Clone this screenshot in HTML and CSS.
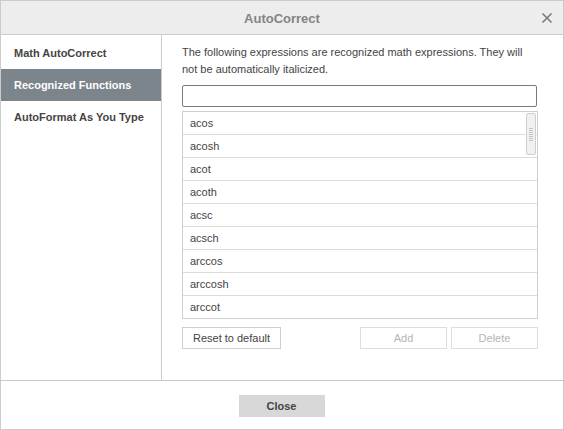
FILE: index.html
```html
<!DOCTYPE html>
<html>
<head>
<meta charset="utf-8">
<link rel="stylesheet" href="styles.css">
</head>
<body>
<div class="dialog">
  <div class="header">
    <span class="title">AutoCorrect</span>
    <span class="close-x">
      <svg width="12" height="12" viewBox="0 0 12 12"><path d="M1.5 1.5 L10.5 10.5 M10.5 1.5 L1.5 10.5" stroke="#7a7a7a" stroke-width="1.6" fill="none"/></svg>
    </span>
  </div>
  <div class="main">
    <div class="nav">
      <div class="nav-item">Math AutoCorrect</div>
      <div class="nav-item active">Recognized Functions</div>
      <div class="nav-item">AutoFormat As You Type</div>
    </div>
    <div class="content">
      <p class="desc">The following expressions are recognized math expressions. They will not be automatically italicized.</p>
      <div class="input"></div>
      <div class="list">
        <div class="row">acos</div>
        <div class="row">acosh</div>
        <div class="row">acot</div>
        <div class="row">acoth</div>
        <div class="row">acsc</div>
        <div class="row">acsch</div>
        <div class="row">arccos</div>
        <div class="row">arccosh</div>
        <div class="row last">arccot</div>
        <div class="thumb"><div class="grip"></div></div>
      </div>
      <div class="buttons">
        <div class="btn reset">Reset to default</div>
        <div class="spacer"></div>
        <div class="btn disabled">Add</div>
        <div class="btn disabled">Delete</div>
      </div>
    </div>
  </div>
  <div class="footer">
    <div class="close-btn">Close</div>
  </div>
</div>
</body>
</html>
```
FILE: styles.css
```css
html, body {
  margin: 0;
  padding: 0;
  background: #fff;
}
body {
  font-family: "Liberation Sans", Arial, sans-serif;
  font-size: 11px;
  color: #444;
}
.dialog {
  width: 564px;
  height: 430px;
  box-sizing: border-box;
  border: 1px solid #cbcbcb;
  display: flex;
  flex-direction: column;
}
.header {
  height: 33px;
  flex: none;
  background: #ededed;
  border-bottom: 1px solid #cbcbcb;
  position: relative;
  display: flex;
  align-items: center;
  justify-content: center;
}
.title {
  font-size: 13px;
  font-weight: bold;
  color: #848484;
  padding-top: 1px;
}
.close-x {
  position: absolute;
  right: 10px;
  top: 11px;
  width: 12px;
  height: 12px;
  display: block;
}
.close-x svg { display: block; }
.main {
  height: 345px;
  flex: none;
  display: flex;
}
.nav {
  width: 160px;
  border-right: 1px solid #cbcbcb;
  padding-top: 2px;
}
.nav-item {
  height: 32px;
  line-height: 32px;
  padding-left: 13px;
  font-weight: bold;
  color: #444;
}
.nav-item.active {
  background: #7d858c;
  color: #fff;
}
.content {
  flex: 1;
  padding: 9px 25px 0 20px;
}
.desc {
  margin: 0;
  line-height: 17px;
  color: #444;
  width: 345px;
}
.input {
  margin-top: 7px;
  height: 20px;
  width: 353px;
  border: 1px solid #7a7a7a;
  border-radius: 2px;
}
.list {
  margin-top: 4px;
  border: 1px solid #cfcfcf;
  position: relative;
}
.row {
  height: 22px;
  line-height: 22px;
  border-bottom: 1px solid #dcdcdc;
  padding-left: 7px;
  color: #444;
}
.row.last {
  border-bottom: none;
}
.thumb {
  position: absolute;
  right: 1px;
  top: 1px;
  width: 8px;
  height: 40px;
  background: #f1f1f1;
  border: 1px solid #cfcfcf;
  border-radius: 2px;
  display: flex;
  align-items: center;
  justify-content: center;
}
.grip {
  width: 4px;
  height: 13px;
  background: repeating-linear-gradient(to bottom, #c4c4c4 0, #c4c4c4 1px, transparent 1px, transparent 2px);
}
.buttons {
  margin-top: 8px;
  display: flex;
  gap: 4px;
}
.spacer { flex: 1; }
.btn {
  height: 20px;
  line-height: 20px;
  border: 1px solid #cfcfcf;
  text-align: center;
  width: 85px;
  color: #444;
}
.btn.reset {
  width: 97px;
  color: #444;
}
.btn.disabled {
  color: #b5b5b5;
  border-color: #dedede;
}
.footer {
  flex: 1;
  border-top: 1px solid #cbcbcb;
  display: flex;
  justify-content: center;
  padding-top: 14px;
}
.close-btn {
  width: 86px;
  height: 22px;
  line-height: 22px;
  background: #d8d8d8;
  text-align: center;
  font-weight: bold;
  color: #444;
  margin-right: 1px;
}
```
